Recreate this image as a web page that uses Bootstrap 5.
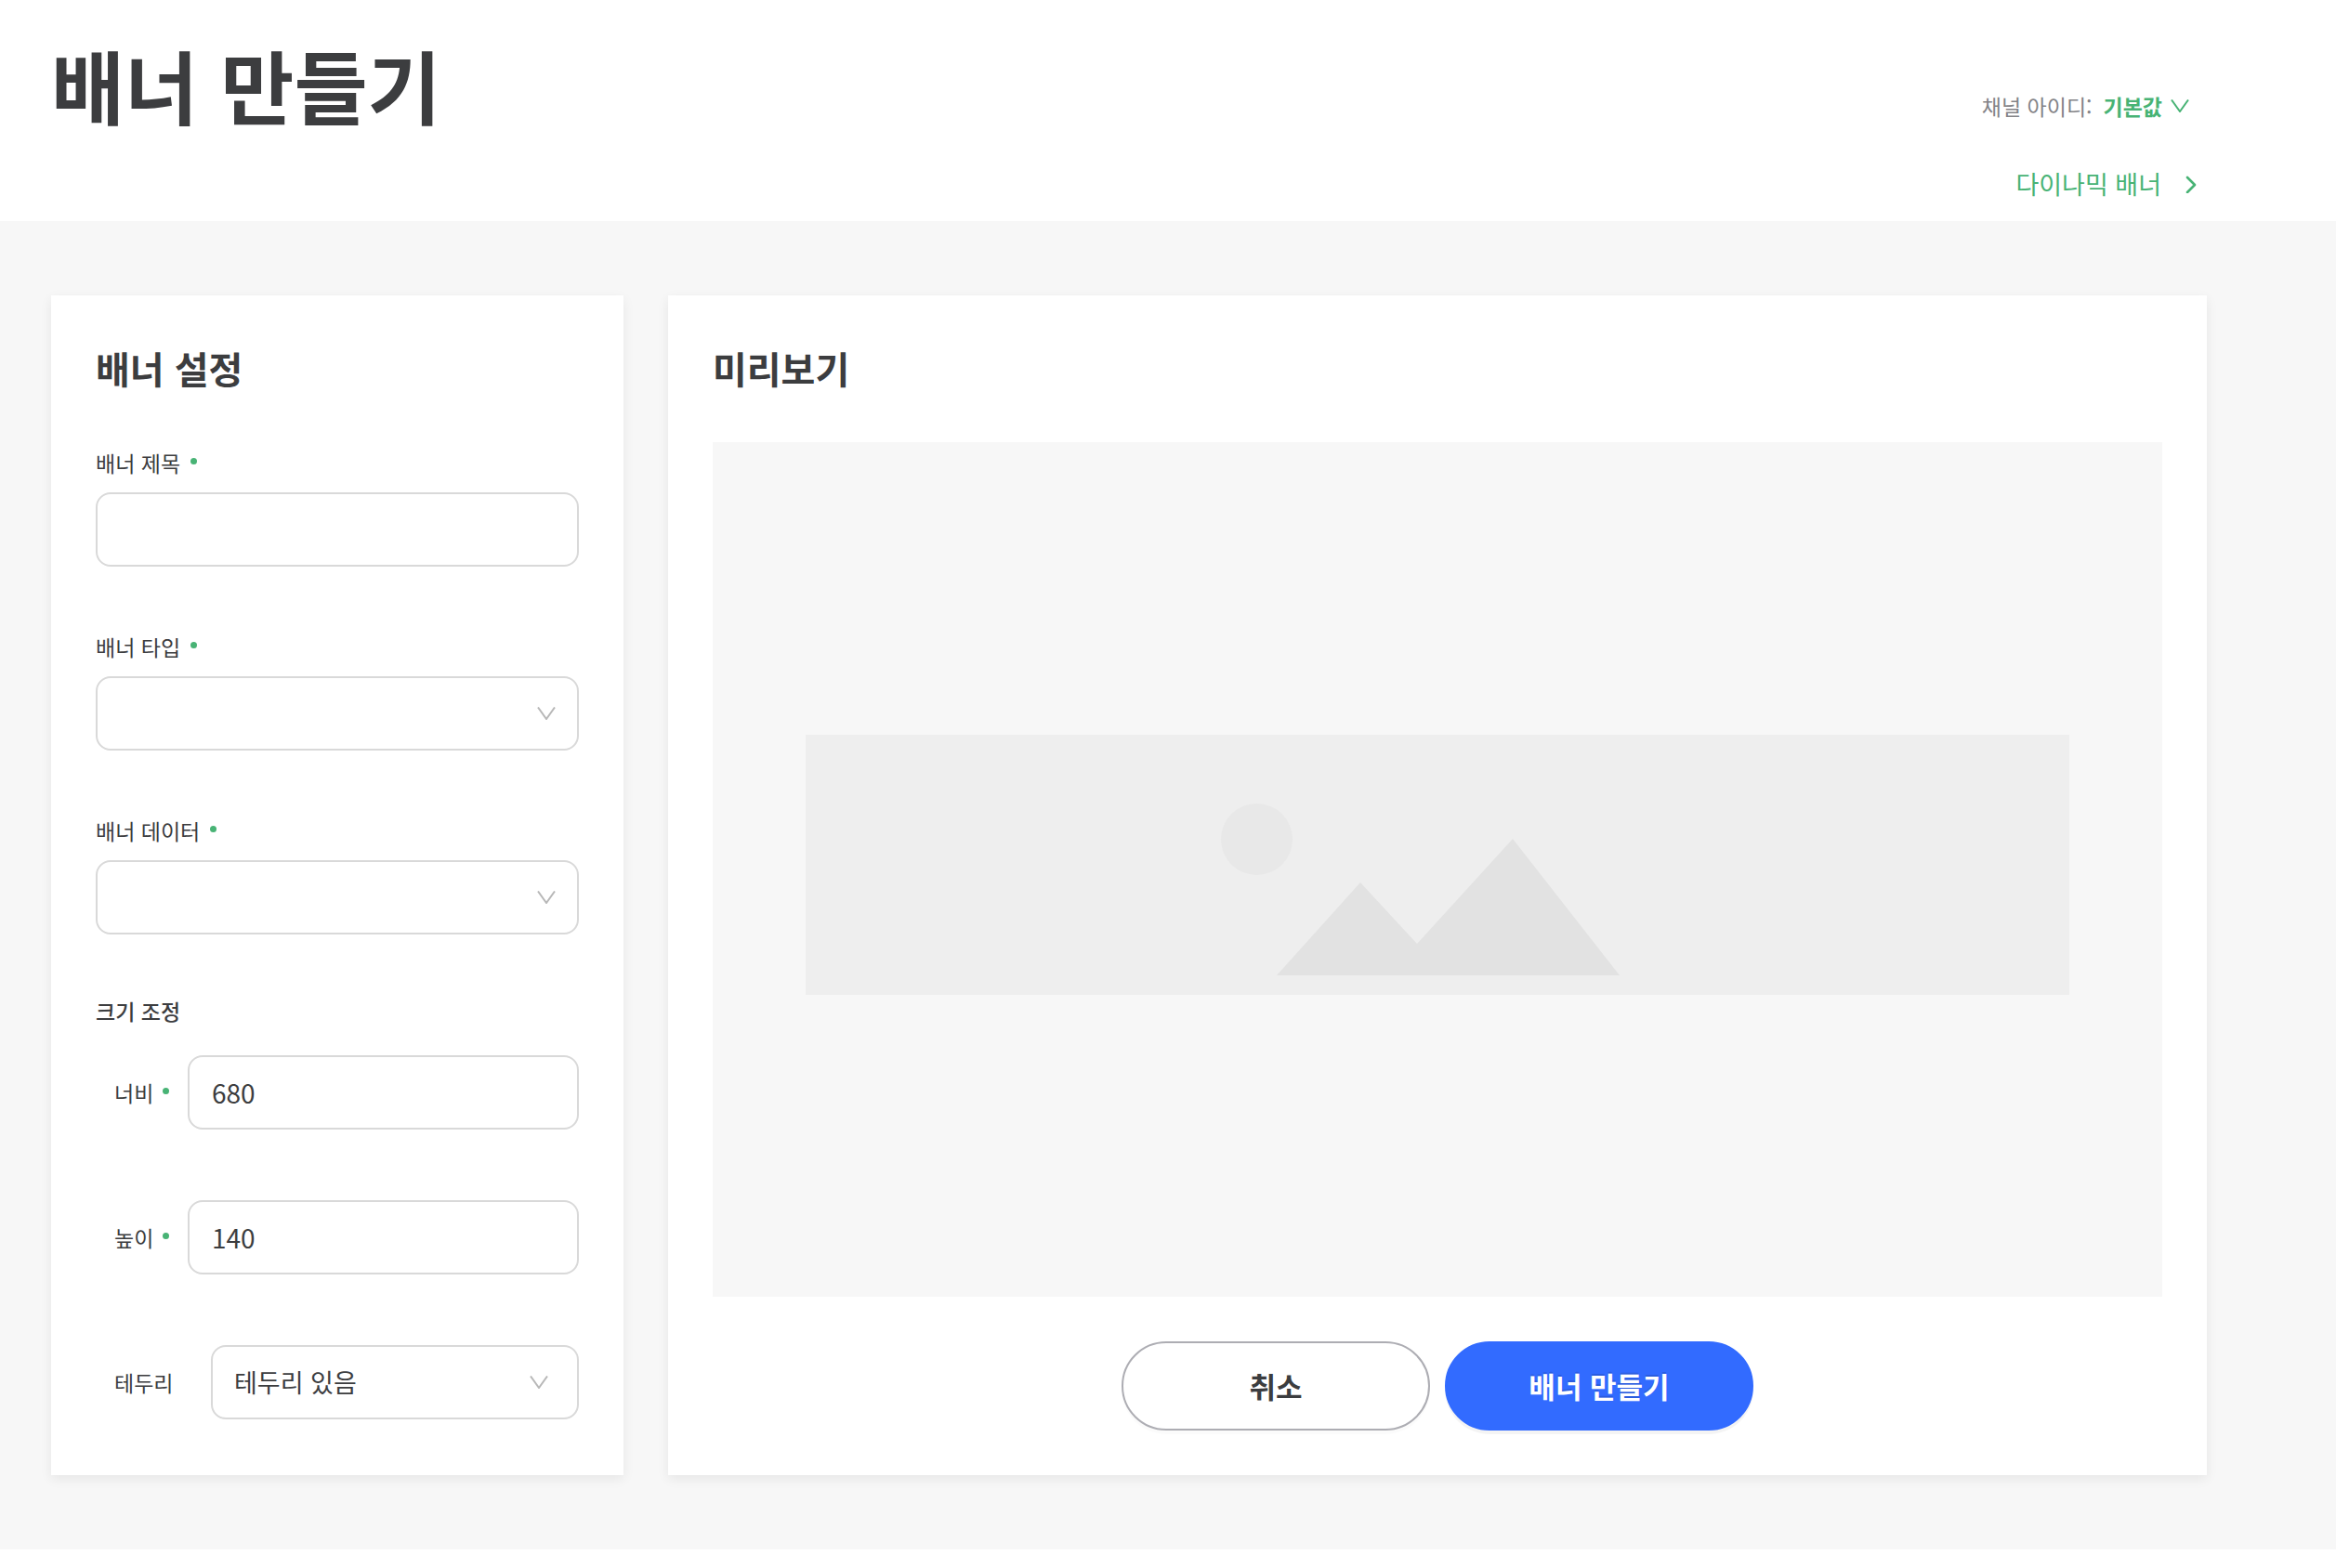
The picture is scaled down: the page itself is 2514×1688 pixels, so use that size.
<!DOCTYPE html>
<html lang="ko">
<head>
<meta charset="utf-8">
<meta name="viewport" content="width=device-width, initial-scale=1">
<title>배너 만들기</title>
<link href="https://cdn.jsdelivr.net/npm/bootstrap@5.3.0/dist/css/bootstrap.min.css" rel="stylesheet">
<style>
  :root { --ink: #3c3d3f; --green: #48b375; --line: #d9d9d9; --page: #f7f7f7; }
  body { font-family: "Noto Sans CJK KR", "Noto Sans", sans-serif; font-size: 23px; line-height: 36px; color: var(--ink); background: #fff; }
  .page-head { padding: 28px 139px 18px 55px; }
  .page-title { font-size: 86px; line-height: 126px; font-weight: 700; }
  .head-links { padding-top: 68px; gap: 44px; }
  .channel-label { color: #838387; margin-right: 12px; }
  .channel-btn { color: var(--green); font-weight: 700; font-size: 23px; line-height: 36px; gap: 9px; margin-right: 19px; }
  .dynamic-link { color: var(--green); font-size: 27px; line-height: 44px; gap: 26px; padding-right: 11px; }
  .page-body { background: var(--page); padding: 80px 139px 80px 55px; gap: 48px; }
  .panel { background: #fff; padding: 48px; box-shadow: 0 4px 12px rgba(0, 0, 0, .07); }
  .panel-settings { flex: 0 0 616px; }
  .panel-title { font-size: 40px; line-height: 60px; font-weight: 700; margin: 0 0 50px; }
  .field { margin-bottom: 64px; }
  .field-label { height: 54px; padding-top: 4px; gap: 11px; }
  .need { width: 7px; height: 7px; border-radius: 50%; background: var(--green); margin-bottom: 4px; }
  .field-label .need { margin-top: 13px; }
  .box.form-control, .box.form-select { height: 80px; border: 2px solid var(--line); border-radius: 16px; font-size: 28px; line-height: 42px; color: var(--ink); padding: 0 24px; background-color: #fff; }
  .box.form-select { font-size: 27px; padding-left: 23px; background-image: url("data:image/svg+xml,%3Csvg xmlns='http://www.w3.org/2000/svg' viewBox='0 0 20 14'%3E%3Cpath d='M1 0.5 10 13 19 0.5' fill='none' stroke='%23b8b8b8' stroke-width='2'/%3E%3C/svg%3E"); background-size: 20px 14px; background-position: right 23px center; }
  .box.box-border { background-position: right 31px center; }
  .size-head { height: 66px; font-weight: 500; }
  .size-row { padding-left: 20px; margin-bottom: 76px; }
  .size-label { width: 79px; gap: 10px; flex: none; }
  .size-label-wide { width: 104px; }
  .preview-area { background: var(--page); height: 920px; padding-bottom: 10px; }
  .placeholder-art { width: 1360px; max-width: 90%; height: auto; }
  .actions { gap: 16px; padding-top: 48px; }
  .action { width: 332px; height: 96px; font-size: 31px; font-weight: 700; border: 2px solid #adadb3; background: #fff; color: var(--ink); box-shadow: 0 4px 0 rgba(0, 0, 0, .016); }
  .action-main { background: #326bff; border-color: #326bff; color: #fff; text-shadow: 0 -2px 0 rgba(0, 0, 0, .12); box-shadow: 0 4px 0 rgba(0, 0, 0, .045); }
</style>
</head>
<body>
<header class="page-head d-flex justify-content-between align-items-start">
  <h1 class="page-title m-0">배너 만들기</h1>
  <div class="head-links d-flex flex-column align-items-end">
    <div class="d-flex align-items-center">
      <span class="channel-label">채널 아이디:</span>
      <button type="button" class="channel-btn btn border-0 p-0 d-flex align-items-center">기본값
        <svg width="20" height="14" viewBox="0 0 20 14" fill="none" stroke="currentColor" stroke-width="2" aria-hidden="true"><path d="M1 .5 10 13 19 .5"/></svg>
      </button>
    </div>
    <a href="#" class="dynamic-link text-decoration-none d-flex align-items-center">다이나믹 배너
      <svg width="12" height="20" viewBox="0 0 12 20" fill="none" stroke="currentColor" stroke-width="2.6" stroke-linecap="round" stroke-linejoin="round" aria-hidden="true"><path d="m2 3 8 8-8 8"/></svg>
    </a>
  </div>
</header>

<main class="page-body d-flex align-items-stretch">
  <form class="panel panel-settings" id="banner-form">
    <h2 class="panel-title">배너 설정</h2>
    <div class="field">
      <label class="field-label d-flex align-items-start" for="title">배너 제목 <span class="need"></span></label>
      <input id="title" type="text" class="box form-control">
    </div>
    <div class="field">
      <label class="field-label d-flex align-items-start" for="type">배너 타입 <span class="need"></span></label>
      <select id="type" class="box form-select"><option></option></select>
    </div>
    <div class="field">
      <label class="field-label d-flex align-items-start" for="data">배너 데이터 <span class="need"></span></label>
      <select id="data" class="box form-select"><option></option></select>
    </div>
    <div class="size-head d-flex align-items-start">크기 조정</div>
    <div class="size-row d-flex align-items-center">
      <label class="size-label d-flex align-items-center" for="width">너비 <span class="need"></span></label>
      <input id="width" type="text" class="box form-control" value="680">
    </div>
    <div class="size-row d-flex align-items-center">
      <label class="size-label d-flex align-items-center" for="height">높이 <span class="need"></span></label>
      <input id="height" type="text" class="box form-control" value="140">
    </div>
    <div class="size-row d-flex align-items-center mb-0">
      <label class="size-label size-label-wide" for="border">테두리</label>
      <select id="border" class="box box-border form-select"><option>테두리 있음</option></select>
    </div>
  </form>

  <section class="panel panel-preview flex-grow-1">
    <h2 class="panel-title">미리보기</h2>
    <div class="preview-area d-flex align-items-center justify-content-center">
      <svg class="placeholder-art" viewBox="0 0 1360 280" role="img" aria-label="미리보기">
        <rect width="1360" height="280" fill="#eee"/>
        <circle cx="485.5" cy="112.5" r="38.5" fill="#e8e8e8"/>
        <path d="M507 259 597 159l61 66L761 112l115 147z" fill="#e2e2e2"/>
      </svg>
    </div>
    <div class="actions d-flex justify-content-center">
      <button type="button" class="action btn rounded-pill">취소</button>
      <button type="submit" form="banner-form" class="action action-main btn rounded-pill">배너 만들기</button>
    </div>
  </section>
</main>
<script src="https://cdn.jsdelivr.net/npm/bootstrap@5.3.0/dist/js/bootstrap.bundle.min.js"></script>
</body>
</html>
